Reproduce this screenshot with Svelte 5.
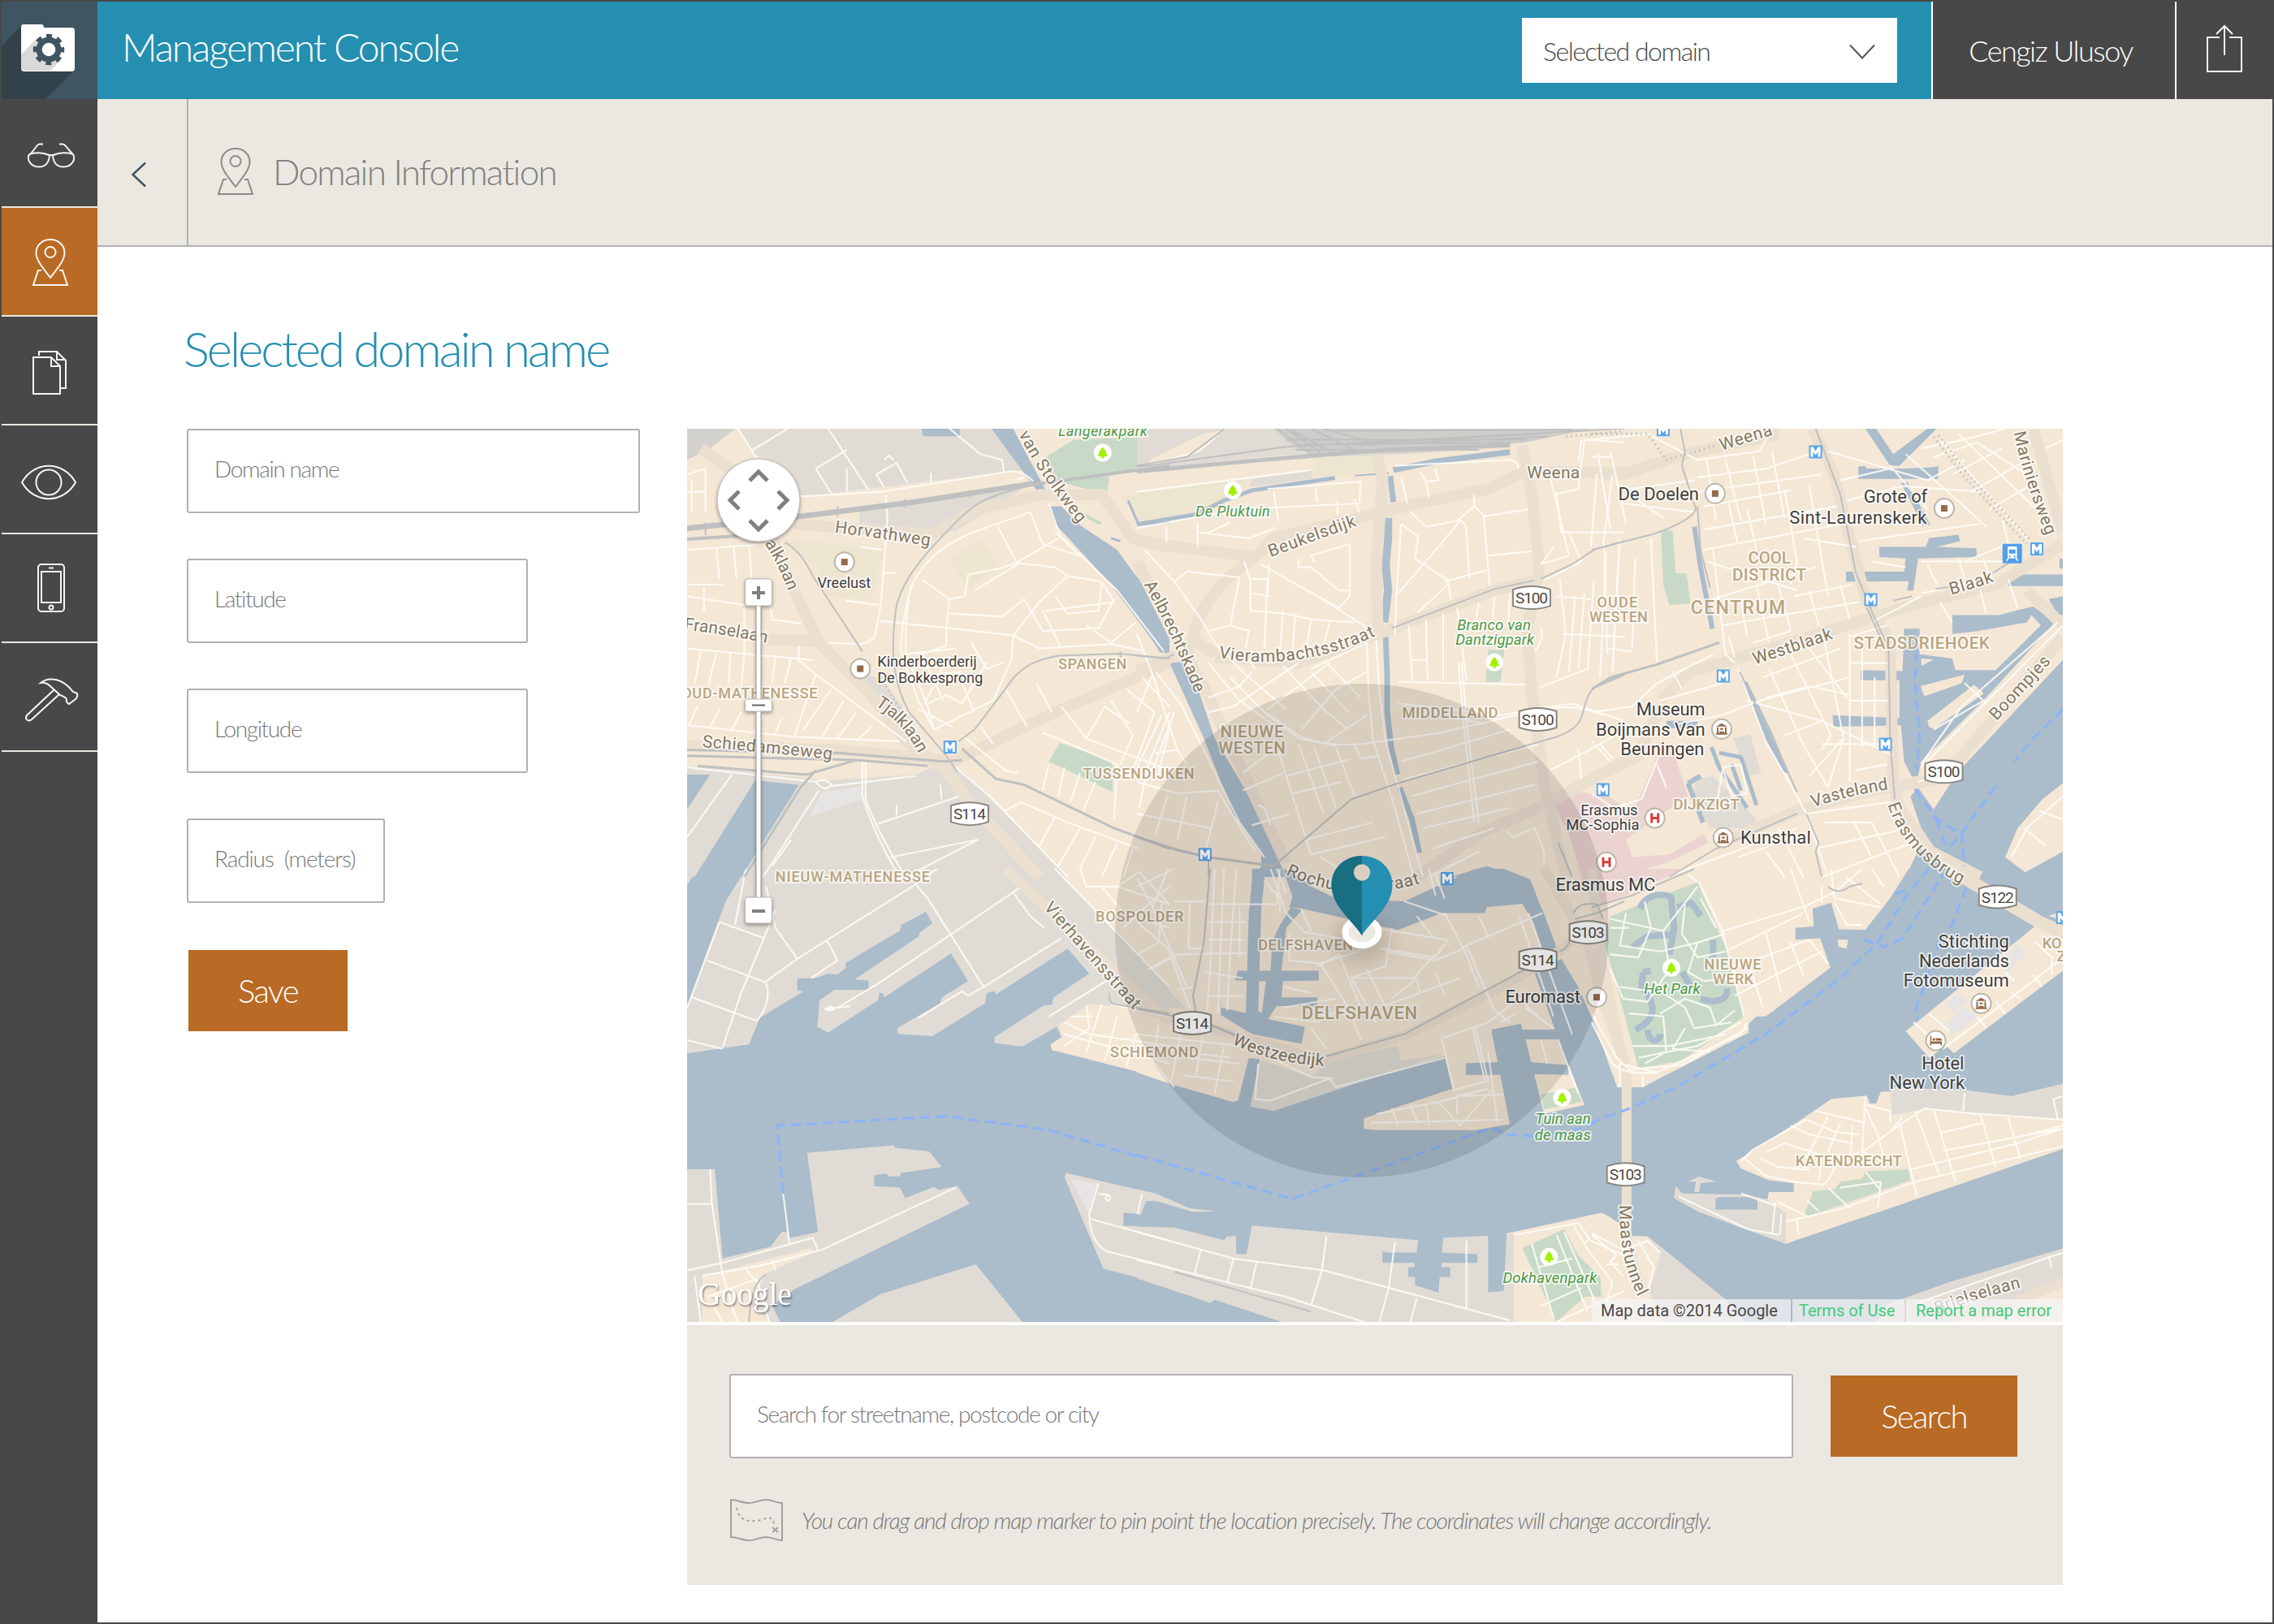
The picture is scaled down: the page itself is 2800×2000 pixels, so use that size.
<script>
  // Each map tile is drawn in its own local units and placed on the map canvas.
  const SX = 0.38265;
  const tiles = {
    A: { x: 840, y: 520, sy: 0.35714 },
    B: { x: 1400, y: 520, sy: 0.35714 },
    C: { x: 1960, y: 520, sy: 0.35714 },
    D: { x: 840, y: 1070, sy: 0.36352 },
    E: { x: 1400, y: 1070, sy: 0.36352 },
    F: { x: 1960, y: 1070, sy: 0.36352 }
  };
  const px = (t, x) => tiles[t].x + x * SX;
  const py = (t, y) => tiles[t].y + y * tiles[t].sy;
  const tf = (t) => `translate(${tiles[t].x} ${tiles[t].y}) scale(${SX} ${tiles[t].sy})`;

  const areas = [
    // south-west harbours
    ['D', 'water', 'M0,0H1568V1568H0Z'],
    ['D', 'ind', 'M205,0L1568,0L1568,715L1400,670L1190,615L1185,595L1220,570L1205,535L1095,602L1005,590L1005,570L1160,465L1190,460L1195,435L1310,355L1240,270L1010,425L1005,415L980,420L975,455L805,567L695,560L692,540L830,455L835,435L920,380L865,287L650,435L645,420L635,420L630,445L470,555L435,535L442,445L490,410L600,410V378L555,375L760,230L765,215L805,185L785,145L705,190L700,210L525,320L527,335L500,358L470,355L430,370L370,372V412L390,415L250,505L215,595L16,625V470L80,280L140,110Z'],
    ['D', 'ind', 'M0,0L50,0L0,80Z'],
    ['D', 'land', 'M1200,0L1568,400V0Z M1310,458L1568,480V715L1190,612L1185,595L1225,568L1210,530Z'],
    ['D', 'ind', 'M402,962L680,937L685,945L795,957L835,1010L705,1030L700,1042L665,1042L655,1032L618,1038V1075L700,1080L718,1115L810,1078L825,1088L885,1075L925,1135L360,1425L290,1480L330,1568L0,1568V1018H105L130,1320L285,1280L320,1230H340L345,1250L437,1230Z'],
    ['D', 'land', 'M65,1380L415,1285L420,1300L270,1370L220,1480L330,1568L65,1568Z'],
    ['D', 'ind', 'M430,1568L640,1440L945,1340L1120,1568Z'],
    ['D', 'ind', 'M1235,1030L1500,1095L1568,1130L1520,1130L1495,1120L1480,1170L1420,1165V1210L1568,1212V1412L1355,1355L1230,1045Z'],
    ['D', 'pale', 'M1250,1050L1340,1065L1310,1170Z'],
    // south-east
    ['F', 'water', 'M0,0H1568V1568H0Z'],
    ['F', 'land', 'M0,0L1020,0L960,100L880,207L820,205L795,205L770,115L710,135L715,195L655,200V240L735,235L768,335L560,500L530,500L505,525V555L200,720L165,740L80,740L0,500Z M790,240L825,240L820,270L795,265Z'],
    ['F', 'pink', 'M0,0H300L45,120L0,130Z'],
    ['F', 'green', 'M340,45L60,160L45,260L150,675L290,650L490,500L440,290Z'],
    ['F', 'land', 'M1010,550L1425,195L1516,225V345L1165,625L1140,600L1085,640Z M1470,160L1568,120V190Z M1370,0H1420L1400,12Z'],
    ['F', 'pale', 'M1140,460L1175,420L1210,450L1170,488Z M1130,530L1200,470L1240,500L1160,565Z M1310,330L1370,255L1395,290L1340,350Z'],
    ['F', 'land', 'M465,990L680,845L770,780L885,768L895,795L915,795L930,755L1205,750L1350,770L1568,715V930L625,1270L480,1215L340,1160L265,1115L270,1075L290,1100L500,1105L565,1120L570,1095L650,1095V1065L570,1055L480,1015Z'],
    ['F', 'ind', 'M960,740L1205,750L1350,770L1380,765L1568,715V850L1500,850L1240,830L1080,812L965,835Z'],
    ['F', 'ind', 'M270,1075L290,1100L500,1105L565,1120L580,1135L625,1165V1270L480,1215L340,1160L265,1115Z M310,1060L345,1042L400,1060L350,1065L345,1095H330L335,1060Z'],
    ['F', 'water', 'M398,1118l10,-6h120l5,6V1155H398Z'],
    ['F', 'green', 'M880,1025L1018,1018L1025,1055L800,1140L680,1182L712,1092L780,1085L800,1060L870,1050Z'],
    ['F', 'ind', 'M0,1165L50,1170L80,1200L95,1240L180,1245L430,1458L520,1568H0Z M950,1475L1150,1400L1568,1270V1568H900Z'],
    ['F', 'land', 'M0,1165L50,1170L80,1200L95,1245L180,1248L222,1300L185,1430L240,1568H0Z M1080,1568L1568,1390V1568Z'],
    // centre south
    ['E', 'water', 'M0,690L110,730L310,790L325,785L360,640L395,645L365,805L440,820L700,725L990,635L1015,745L730,845V880L770,885H1090L1200,865L1140,545L1235,525L1240,545L1345,545L1280,355L1365,305L1420,400L1470,520L1545,740L1568,740V1210L1540,1190L1495,1165L1190,1235L1180,1568H0V1125L30,1120L0,1085Z'],
    ['E', 'land', 'M1250,578L1355,578L1440,800L1310,830Z M0,610L200,640L320,785L110,730L0,690Z'],
    ['E', 'ind', 'M0,1212L120,1215L280,1258L290,1245H318L320,1305H352L370,1208L905,1258L895,1410L970,1435L985,1250L1130,1243V1435L1180,1430L1190,1235L1215,1238V1568H560L250,1460L235,1472L195,1455L0,1388Z M0,1085L60,1100L170,1150L255,1160L180,1162L60,1125L30,1125L10,1175L0,1165Z'],
    ['E', 'land', 'M1213,1235L1495,1165L1568,1210V1568H1213Z'],
    ['E', 'water', 'M790,1295L805,1300H900L905,1258L985,1250L980,1300L1095,1305V1335H980V1350H1008V1382H970V1435L895,1410V1382H873V1350H893V1335H790Z M1058,658L1165,655L1170,698H1058Z M1265,655L1390,665L1388,698L1270,695Z M1240,545H1350V578H1240Z'],
    ['E', 'water', 'M370,0L410,0V40L400,130L390,480L425,510L540,535L530,593L370,560L270,495V470L350,488L360,150L370,40Z M495,130L530,140L480,200L465,345L585,345V378L470,380L465,435L580,435V465L450,465L420,510L400,500L415,380L315,378L325,345L430,345L435,250L455,200Z'],
    ['E', 'water', 'M470,0L500,95L490,130L530,135L840,207L980,150L1120,150L1125,130L1240,118L1275,180L1310,290L1350,270L1300,130L1265,35L1180,0H1090L860,110L640,100L560,60L500,10Z'],
    ['E', 'ind', 'M0,300L160,475L0,455Z M400,650L560,705L620,650L840,600L850,650L990,628L440,820L365,805Z'],
    ['E', 'pink', 'M1425,0H1568V90L1440,80Z'],
    ['E', 'green', 'M1568,150L1500,240L1568,480Z M1300,765L1415,740L1430,790L1310,815Z M1240,1285L1375,1220L1420,1310L1490,1380L1495,1450L1440,1450L1350,1535Z'],
    // north-west
    ['A', 'ind', 'M180,22L1000,22L1110,165L1050,170L390,258L360,200L300,135L230,110Z M570,290L1120,215L880,375L570,350Z M1500,22H1568V100L1480,125Z'],
    ['A', 'rails', 'M16,22H170L90,90L16,130Z'],
    ['A', 'olive', 'M320,400L650,440L610,615L470,600L430,500Z M860,470L960,405L1020,500L920,575Z M1420,260L1568,225V350L1470,350Z'],
    ['A', 'ind', 'M16,1185L460,1235L750,1215L850,1170L910,1210L1240,1568H16Z M560,870L640,880L740,1030L650,990Z'],
    ['A', 'pale', 'M450,1275L585,1255L580,1300L410,1360Z'],
    ['A', 'water', 'M995,22H1065L1170,235L1145,240Z M1180,290L1220,290L1280,355L1400,440L1480,560L1568,690V800L1540,790L1380,560L1200,350Z M770,22H893V48H775Z M0,1215L90,1215L0,1360Z M235,1235L375,1250L190,1568L40,1568Z'],
    ['A', 'green', 'M1170,120L1260,60L1500,50L1470,100L1500,150L1375,180L1365,260L1300,230L1200,200Z M1215,1105L1385,1170V1275L1180,1170Z M1270,300L1350,345L1345,355L1300,330Z'],
    // north-centre
    ['B', 'ind', 'M0,22H1480L1100,95L720,118L480,112L0,165Z'],
    ['B', 'yard', 'M440,22H1460L1250,70L900,105L560,112L500,80Z'],
    ['B', 'land', 'M210,40L270,30L200,100L40,150L40,130Z'],
    ['B', 'olive', 'M0,240L370,190L340,240L180,320L0,350Z M570,120L770,115V170L570,190Z'],
    ['B', 'ind', 'M370,195L565,165V195L360,225Z'],
    ['B', 'water', 'M0,530L60,640L105,790L75,795L0,670Z M105,830L150,825L200,930L250,1090L350,1270L460,1510L475,1568H375L400,1530V1490L310,1350L215,1090Z M1010,1568L1125,1530L1230,1568Z'],
    ['B', 'green', 'M1130,785H1182L1170,895H1122Z'],
    ['B', 'pink', 'M1340,1320L1420,1275L1520,1290L1568,1350V1568H1430L1390,1420Z'],
    // north-east
    ['C', 'pink', 'M220,1100L260,1130L310,1290L240,1340L110,1440L130,1500L250,1490L360,1420L375,1450L240,1520L100,1560L0,1568V1290L50,1285L130,1350L200,1180Z'],
    ['C', 'ind', 'M455,1090L510,1075L545,1210L500,1220Z M330,1230L390,1220L530,1370L525,1400H380L330,1300Z'],
    ['C', 'green', 'M222,372H260L270,520L305,522L318,625L250,630L230,560Z'],
    ['C', 'water', 'M1568,760L1210,1170L1170,1220L1100,1335L1050,1260L1025,1290L1060,1400L1075,1420L1010,1568H1568Z'],
    ['C', 'land', 'M1568,1200L1450,1300L1370,1400L1330,1500L1395,1552L1568,1450Z'],
    ['C', 'water', 'M1005,712H1055V800L1160,815L1170,855H1300L1445,700L1415,665L1400,690L1240,720L1160,730V665L1310,665L1420,635L1490,690L1260,960L1060,1170L1050,1220L1030,1222L1005,1170L995,1045L778,1050L775,1010L990,1020V890L865,890V855L1000,858Z M1470,610L1516,600V665H1500Z'],
    ['C', 'land', 'M1058,910L1200,870L1190,900L1070,945Z M1080,1030L1230,905L1262,935L1100,1058L1085,1050Z M1060,815L1100,818L1060,840Z'],
    ['C', 'water', 'M858,152H880L885,160H1000L1100,155L1115,152V195H858Z M880,22H915L970,110L1080,22H1110L990,150H960Z M995,210L1015,205L1090,355H1065Z M925,430H1075L1085,400L1180,388L1185,410L1110,430L1238,435V465L1050,470L1035,580H1015L1020,548L818,550V515L1005,515L1010,470L925,465Z M1340,525H1516V565H1340Z M1505,470H1516V505H1505Z M240,1030H340V1055H240Z'],
    ['C', 'water', 'M480,890L500,895L580,1070L635,1212L615,1205L550,1080L520,980Z']
  ];

  const waterLines = [
    ['A', 3, 'M1435,270L1468,352L1568,345 M1290,240L1325,245 M1380,400L1410,410'],
    ['B', 5, 'M0,352L190,318L280,270L370,235L637,192'],
    ['B', 2, 'M702,184L810,176'],
    ['B', 7, 'M825,165L960,135L1200,103'],
    ['B', 7, 'M815,185L825,275 M845,1260L885,1370L908,1485'],
    ['B', 10, 'M808,330V400L800,490L808,580L795,690'],
    ['B', 7, 'M800,738L805,870L805,1000L818,1120L838,1215'],
    ['C', 6, 'M330,360L350,500L388,712 M310,1245L358,1380 M310,1245L350,1220'],
    ['C', 5, 'M385,1120L410,1190L500,1330 M410,1140L480,1155L530,1320 M450,1180L480,1270'],
    ['E', 4, 'M1300,140L1345,268'],
    ['F', 8, 'M155,135C170,90 220,80 255,95L265,200L250,290 M130,265L180,228L270,222 M275,130L320,115L350,160 M390,240V300 M290,350L320,400 M350,440C410,460 440,440 435,405 M165,350L190,345M165,350L160,400C210,460 210,510 140,545 M180,545C180,590 220,590 220,560']
  ];

  const arterials = [
    ['A', 14, 'M60,90L180,180 M290,400L360,580L440,760L600,930L720,1100L850,1200L930,1320L1150,1568 M870,1170L1200,1000L1568,830 M800,390L950,300L1150,250L1350,250L1450,400L1568,430 M260,750L440,755 M16,1115L500,1130L850,1165 M360,350L800,390'],
    ['B', 14, 'M775,115L790,200L770,500L775,720 M1240,80L1270,250L1295,500L1255,720L1270,930L1310,1250L1380,1568 M0,410L200,440L380,465L440,400L710,330L900,280L1130,230L1250,170L1568,175 M380,465C280,540 200,620 180,750L250,800 M180,780L0,860 M250,810L520,830L765,735L1000,640L1150,580L1290,545 M0,480L130,760L210,900L330,1180L480,1520 M900,1568L1100,1420L1310,1320L1568,1170'],
    ['C', 14, 'M0,175L100,180L300,110L600,40 M710,22L780,180L830,400L880,600L960,760L970,1250L990,1330L1090,1480L1250,1568 M220,960L320,860L450,820L700,740L1000,640L1300,560L1516,420 M0,1230L150,1150L220,980 M1420,22L1516,380 M400,1460L660,1340L900,1270L1120,1230 M1120,1230L1200,1140L1516,740 M1400,580L1516,700'],
    ['D', 12, 'M1040,0L1568,520'],
    ['E', 12, 'M0,470L300,560L600,650L870,560L1100,440L1290,330L1420,230 M1310,0L1450,250L1490,420L1568,650'],
    ['F', 16, 'M1150,0L1440,180L1568,240'],
    ['F', 12, 'M0,0L30,300L112,700V1260L160,1440 M1130,1568L1516,1400']
  ];

  const streets = [
    ['A', 'M220,100L340,22 M180,22L240,125 M470,22L600,235 M860,22L960,110L1030,130L1035,170 M380,256L640,240L1050,170Q1100,165 1130,205 M430,160L530,95 M430,160L480,245 M530,160V240 M625,180L690,140L725,210 M625,180L650,225 M650,130L665,115L680,130 M800,205V175 M655,250L660,330L650,480L640,620L620,740Q590,770 560,765L470,760 M650,520H685 M525,615L630,630 M570,430L645,440'],
    ['A', 'M16,440L270,420 M110,430L120,540 M165,425L175,540 M215,425L225,560 M16,560H130 M16,600L200,630 M16,180L75,160V310 M30,200V310 M16,240H75 M270,540L290,680L385,695 M70,570V650 M200,640V800 M16,780L420,820 M60,790L40,900 M110,795L85,905 M155,795L150,900 M200,800L190,910 M250,805L235,905 M300,810L290,900 M350,815L330,900 M375,770V820L430,870L720,1100 M16,1045L360,1085L700,1100 M50,980L20,1045 M120,990L90,1050 M190,1000L160,1060 M260,1010L230,1070 M320,1020L300,1075 M430,870L360,1085 M480,920L390,1060 M520,960L450,1085 M560,1000L500,1090 M610,1050L560,1100'],
    ['A', 'M1120,310L960,370Q800,430 740,560Q700,700 705,800L760,960L810,1060 M735,560Q715,700 720,800L790,980L810,1060 M775,545L860,610L850,710L850,770L770,800 M860,610L910,600L920,525L1020,505L1075,485L1210,400 M1015,360L1080,490L940,580 M1075,485L1200,500L1240,530 M1120,310L1160,420L1290,465 M1200,380L1280,460 M1240,530L1150,620L1065,735L860,710L635,685 M1240,530L1350,550L1390,620L1170,650 M860,660L1030,670L1100,610 M1100,610L1160,720L1340,710L1390,610 M1065,735L1150,780L1380,765L1490,790 M1065,735L1060,820L1000,960L810,1060 M1200,600L1240,660L1340,650L1350,555 M1300,700L1380,760L1460,690 M1160,650L1220,780 M930,760L980,850L1030,830 M720,800L880,780 M770,800L840,960 M850,820L780,970 M900,900L940,1000 M790,970L850,940L900,970L980,830 M730,880L900,860 M760,990L870,1050 M1180,280L1215,390L1400,580L1550,790 M1070,200L1100,190'],
    ['A', 'M1220,980L1300,1090L1568,1200 M1300,1090L1360,980L1440,1040 M1380,960L1450,1080L1410,1180 M1430,920L1520,1000L1450,1200 M1480,880L1568,980 M1160,1070L1250,1110L1400,1180L1390,1370 M1568,1000L1500,1180L1470,1330 M1568,1060L1530,1220 M1180,1180L1160,1270 M1230,1190L1210,1290 M1280,1210L1250,1310 M1330,1240L1290,1340 M880,1190L1000,1300L1240,1568 M1040,1340L1090,1310L1240,1380L1470,1470 M1200,1360L1150,1460 M1280,1400L1210,1530 M1330,1430L1280,1540 M1400,1450L1350,1568 M1450,1470L1420,1568 M900,1080L1040,1200L1080,1210 M960,1050L1000,1110 M1040,920L1110,1050 M1140,900L1190,1000'],
    ['A', 'M16,1190L430,1240Q460,1225 480,1250Q460,1280 430,1240 M480,1255L750,1220 M590,1170V1300Q640,1440 720,1568 M580,1170V1290Q620,1430 700,1568 M630,1385L890,1290 M690,1320V1355 M830,1250L835,1300 M670,1500L950,1440L720,1568 M160,1215L16,1430 M440,1270L260,1568 M350,1440L290,1530'],
    ['B', 'M0,240L560,165 M0,160L200,100L280,25 M0,365L330,300L715,280L720,205L420,230 M95,360V415 M195,345V430 M195,380L360,400L445,365 M230,380L300,345 M440,240L455,340 M575,225L580,275 M645,270V320 M700,265L715,310 M570,480L560,460L685,420V600L650,640L480,540L400,490 M520,470V500H560L650,580H685 M25,440L120,550L200,670L250,760L340,860L480,990 M160,515L330,535L300,700 M120,550L160,515 M230,720L300,700L360,720L350,780 M360,540L420,540L410,780 M345,480L365,550V650L480,660L560,680L700,690 M550,580L640,640L750,715 M470,650L460,790 M510,660L500,790 M560,680L545,780 M620,690L600,770 M425,490L420,600 M360,820L380,850 M370,590L430,600'],
    ['B', 'M830,150L1200,130Q1230,135 1225,160 M850,190L870,280 M910,170L930,205L970,200L960,160 M930,205L940,260 M850,350L905,395L895,470L1000,545L1010,610 M880,310L930,360L1030,340L1085,290V250 M840,590L930,480L1040,340Q1060,345 1060,380L1070,540 M1085,290L1115,320L1135,560 M1115,325L1260,300 M1130,460L1270,445 M990,550L1125,510 M905,655L1000,560 M850,350L835,600L830,730 M1300,490L1390,460L1370,370L1330,190 M1340,250L1420,230L1440,60L1568,70 M1350,240L1365,380L1568,380 M1430,60L1420,140 M1480,180L1460,430 M1530,180L1500,420 M1390,380L1430,480L1310,545 M1300,490L1340,430'],
    ['B', 'M875,700L885,890 M930,680L935,890 M985,660V890 M1030,640L1060,890 M840,895L1250,905 M1100,620L1090,690H1120 M1150,600L1145,680 M1200,590L1195,690 M885,820H930 M1295,915L1450,850L1470,550 M1360,540L1380,730L1350,880 M1410,600L1390,860 M1440,590L1420,850 M1350,600L1460,610 M1370,730L1568,740 M1510,450L1490,880 M1550,470L1530,860 M1300,710Q1310,750 1280,790 M740,760L745,930L760,1100L830,1330L890,1568 M770,750L780,930L800,1100L920,1568 M560,850L740,760 M470,840L600,990L680,1060 M560,860L680,1000 M610,830L720,950 M420,990L620,830 M530,1060L640,920L740,860 M840,970L1170,1010L1400,970L1568,1030 M850,985L1120,1040 M600,1110L740,1010 M400,990L520,1080Q600,1120 720,1110L980,1070L1300,990Q1420,970 1500,1010'],
    ['B', 'M230,830L330,960L460,1060 M230,950L330,910L370,860 M300,880L420,1010L520,1090L640,1115 M230,1000L310,980L520,830 M60,860L140,970L210,1120L330,1380L410,1500 M0,730L50,870L0,1000 M50,870L130,1130 M80,1010L0,1190 M120,1000L50,1200 M60,1140L130,1130L160,1180 M0,1240L130,1280L260,1270L380,1480 M260,1310L220,1480 M100,1280L60,1420 M160,1290L130,1440 M0,1350L240,1400 M340,1210L450,1120L480,1220L560,1490 M450,1120L540,1420 M520,1110L600,1350 M570,1120L640,1330 M340,1270L470,1210 M390,1320L410,1330L430,1390 M370,1390L490,1350 M480,1220L690,1160 M500,1280L660,1240 M540,1440L760,1380 M590,1500L700,1568 M560,1490L800,1430 M640,1120L700,1290 M700,1110L720,1160L780,1150'],
    ['B', 'M850,1170L1200,1060 M860,1230L1290,1110 M880,1290L1290,1170 M900,1350L1280,1250 M920,1400L1200,1330 M950,1470L1150,1400 M1045,830L1060,1030L1100,1380 M1035,830L1050,1030L1085,1380 M940,1568L1100,1480 M1190,1410L1210,1430L1280,1400L1310,1480V1520 M1330,1200L1490,1110L1568,1060 M1420,1130L1430,1230 M1490,1110L1530,1160'],
    ['C', 'M0,60L180,40L340,130L540,100L580,22 M20,110L60,370 M60,100L110,350 M100,280L330,310 M120,230L330,200 M150,270L230,330 M340,190L560,160L700,110 M430,130L480,340 M370,130L400,340 M520,120L560,350 M580,100L620,330 M340,240L740,180 M360,290L640,235 M360,370L790,290 M360,440L810,350 M440,280L470,420 M500,300L530,440 M620,230L660,480L640,560 M700,220L760,600 M680,400L850,430 M370,480L660,580 M650,600L840,560 M390,610L720,500 M420,700L860,620 M530,560L570,760 M600,560L640,720 M700,580L730,700 M800,560L830,680 M480,620L500,740 M0,120H60'],
    ['C', 'M760,100L1080,200L1200,130 M800,200L960,160 M820,270L1000,220L1250,240 M960,150L1080,300 M1010,110L1270,360 M1120,60L1400,400 M1180,40L1460,330 M1060,90L1200,60L1330,22 M1100,120L1240,70L1400,180 M1160,180L1320,90 M1220,240L1400,130 M1280,300L1440,200 M860,410L1250,350 M840,340L1050,350 M1200,480L1340,420L1320,330 M1060,480L1350,480 M1080,490L1110,560 M1180,470L1200,540 M1260,470L1290,560 M1060,590L1230,550 M900,480L1010,500 M900,690L1060,600 M1120,620L1160,690 M1250,580L1270,660 M1340,540L1370,640 M1516,60L1460,90'],
    ['C', 'M390,440L430,800L460,830 M440,740L460,810 M0,690H180 M140,470L130,780 M190,400L210,830 M90,400L70,780 M40,420L50,800 M50,780L130,790 M0,1000L130,980L210,900L390,800 M220,960L420,900 M260,860L290,920 M280,1040L420,1010L540,960L830,880 M470,850L560,1100L660,1290 M500,960L740,1030L970,1150 M570,850L680,1110L760,1260 M640,800L770,1080L740,1130 M700,780L820,950 M750,760L810,1090L760,1260 M830,730V1240 M870,780V1120 M910,880V1110 M550,880L800,780 M520,760L640,720 M560,950L700,910L830,940 M620,1080L740,1030 M740,1110H960 M700,1220L810,1090 M830,830H950 M830,960H960 M850,1200L950,1180 M830,740L950,700'],
    ['C', 'M660,1290L690,1350L760,1568 M690,1350L960,1310 M750,1380H900 M720,1470L1020,1400 M740,1568L1030,1450 M840,1370L900,1500 M900,1380L990,1568 M560,1480L620,1568 M470,1500L680,1420 M600,1400L680,1568 M220,1140L160,1300L70,1330L0,1280 M0,1100L60,1170 M210,1180L240,1260 M260,1560L660,1400 M420,1200L400,1330 M420,1190L480,1180L500,1280L450,1290Z M1516,700L1060,1190 M1500,690L1190,980L1060,1180 M1100,1060L1260,960 M1200,900L1270,970 M1516,1290L1400,1400L1350,1500 M1390,1400L1460,1460 M1440,1340L1516,1370 M1050,1240L1180,1200'],
    ['D', 'M205,1L170,190 M120,180L265,235 M80,310L270,385 M30,435L240,515 M16,580L130,610 M120,180L16,470 M300,140L190,420L130,605 M270,60L300,200L370,305 M265,385L370,305L740,60L820,0 M750,50L790,100L970,400 M270,385Q290,450 240,515 M465,240L500,310L415,370 M615,400L1085,65 M1065,80L1120,160L1165,200 M970,400L1220,235 M760,505L900,415L920,430L970,400 M500,470L620,395 M460,475Q480,460 490,475Q480,485 460,475L540,465 M1180,500L1380,370 M1200,0L1568,400 M1380,460L1568,500'],
    ['D', 'M1300,460L1310,540L1230,600 M1350,460L1300,620 M1230,520L1310,560L1568,600 M1400,500L1360,650 M1250,500L1320,500 M1230,560L1568,660 M1460,560L1430,670 M1280,0L1300,60H1400L1568,120 M1350,60L1420,150L1568,200 M1400,60L1470,10L1568,120 M1420,200L1500,120L1568,60 M1500,340L1568,300'],
    ['D', 'M90,1018L95,1130L130,1380 M16,1135H95 M16,1360L130,1335L420,1250L437,1290 M40,1380L60,1535 M325,1100L345,1270 M65,1378L250,1345L450,1290L880,1080 M130,1370L165,1500L180,1535 M200,1350L240,1400 M290,1325L300,1360 M80,1450L240,1390L280,1535 M100,1480L130,1535 M1310,1170Q1310,1260 1365,1295L1568,1350 M1310,1185L1568,1260 M1340,1100L1370,1105Q1385,1110 1370,1125Q1355,1120 1370,1105 M1340,1065L1310,1170 M1480,1100L1465,1170'],
    ['E', 'M0,1230L310,1320L600,1360L1200,1530 M0,1325L480,1450L730,1535 M205,1290L185,1375 M310,1320L290,1405 M385,1330L365,1425 M610,1245L595,1360L560,1480 M830,1265L810,1420L780,1535 M900,1455L880,1535 M1060,1260V1490 M1215,1240L1420,1200L1460,1260L1568,1310 M1455,1250L1440,1270 M1270,1270L1340,1520 M1350,1240L1450,1500 M1375,1230L1480,1480 M1400,1200L1450,1290L1530,1400L1510,1470 M1290,1350L1400,1320 M1300,1480L1430,1420 M1350,1535L1568,1430 M1510,1340H1550'],
    ['E', 'M0,30L50,130L160,400 M0,60L120,0 M100,0L50,130 M80,110L70,250L0,290 M120,110H220 M170,110L165,270H215 M45,340L130,290L350,285 M0,180L100,270L170,470 M130,410L180,400 M250,0L235,350L225,480 M280,0L260,490 M320,0L300,280L290,480 M230,120H450L460,0 M230,180H350 M230,240H350 M220,350L340,370 M230,430H340 M330,130L330,300 M430,0L480,150L540,215L740,250 M410,40L460,100V150 M490,220V310L590,320L740,270 M530,140L560,210'],
    ['E', 'M700,190L1000,240L960,300L780,270 M820,200L800,330L690,370L770,520 M590,320L680,470L720,580 M650,290L720,470 M580,330L650,290 M700,370L890,370L960,290 M990,150L1050,270L960,310L800,280 M1050,265L1305,150 M1050,265L1100,400 M1100,160L1130,230 M860,110L1000,160 M900,160L960,240 M740,340L800,470 M820,440L900,370L910,420L960,400 M780,470L1040,370 M960,350L990,430 M590,500L700,470 M1060,260L1150,480L1200,520 M470,400L560,420 M470,470L640,440 M440,500L590,520 M980,575L1130,520L1230,440L1290,500 M980,575L1020,750L1120,720L1080,540 M1090,540L1130,720 M1030,830L1030,770L1110,750 M770,830L970,790L1130,745 M820,810L840,870 M880,800L905,865 M930,795L940,870 M970,790L1040,870L1140,750 M1130,620L1160,860 M750,860L1180,850 M1040,770L1180,765 M1250,470L1340,540 M1300,580L1320,660 M1355,578L1420,760 M1230,160L1340,500 M1260,150L1400,560 M1170,520L1220,490'],
    ['E', 'M0,600L300,640 M0,560L330,600 M70,530L50,650L120,740 M140,560L110,720 M210,570L190,700 M280,600L250,760 M160,640L330,660 M150,700L310,720 M390,660L380,780L430,785L620,710L640,740L990,640 M430,640L560,705L630,710 M560,540L610,610 M450,0L480,80 M940,0L960,90 M960,20L990,100'],
    ['F', 'M0,520L60,650Q90,700 210,690L480,560L500,520 M0,490L80,640L120,680L290,665L500,540 M345,45L420,210L490,500 M410,215L690,125L780,80L870,0 M640,0L700,180 M440,275L680,150 M470,330L700,240 M560,215L610,420 M460,430L740,280 M700,240L760,320 M500,300L550,470 M640,250L680,360 M770,0L780,100L930,130 M780,110L820,190H870 M820,30L930,120 M900,0L940,60 M760,60Q790,90 830,60 M740,115V60 M310,20L340,45 M210,690L90,660V740 M165,740V700'],
    ['F', 'M60,170L230,210L340,60 M110,150L90,260L220,280L340,250L430,220 M170,110L190,200L150,300L60,290 M60,200H120 M230,210L250,340L180,450L100,440 M300,120L290,220L340,300L430,280 M340,250L310,350L360,380L460,370 M90,400L230,420L300,470L330,540L450,520 M220,490L300,440L380,470L400,530L460,480 M120,490L230,500L240,620L170,660 M300,540L260,610L380,620 M130,600L250,600L430,560 M350,100L400,200 M150,640L340,600L480,520 M200,380L230,420 M60,340L100,440'],
    ['F', 'M480,990L520,950L690,850 M490,980L560,1040L650,1060L740,1070Q770,1060 790,980L860,960 M560,960L620,930L740,970L730,1060 M540,980L600,1010L700,1020 M640,870L700,900L840,930 M690,850L780,890L860,900 M720,820L880,860 M760,840L690,980 M800,860L760,960 M840,870L830,980 M880,770L870,960L870,1000 M880,810L920,900L940,980L870,960 M885,800L960,820V860 M870,960L960,890L1070,812L1240,830L1516,850 M960,890L1000,840 M990,860L1045,1105 M1040,820L1120,1040 M1100,815L1170,1060 M1250,830L1300,1010 M1340,845L1380,985 M1120,895L1260,860 M1130,955L1516,880 M1020,1020L1370,930L1516,880 M1040,1060L1516,940 M1370,910L1516,870 M625,1195L810,1150L1040,1060 M660,1190L665,1240 M800,1080L930,1060L920,1150 M760,1080L830,1150 M690,1120L730,1160 M700,1180L600,1130 M590,1130L580,1240 M610,1170L605,1240 M280,1110L500,1220L600,1240 M480,1100L590,1140 M880,1025L930,1090 M1200,760L1195,820 M1516,770L1485,780L1500,850'],
    ['F', 'M1035,520L1120,600 M1085,490L1150,550 M1130,610L1420,380L1516,300 M1240,500L1270,540 M1300,450L1330,490 M1350,420L1380,440 M1420,360L1450,400 M1430,250L1480,300V360 M1330,350L1360,380 M0,1235L100,1290L180,1260L220,1300 M150,1260L200,1350L180,1430 M0,1240L80,1310L60,1330L100,1380 M1050,1470L1516,1300 M1470,1310L1480,1350']
  ];

  const rails = [
    ['A', 4, 'M16,370L370,330L740,280L1130,215L1568,150 M16,362L370,322L740,272L1130,208 M16,403L280,385'],
    ['A', 2, 'M330,415Q380,440 420,530L580,790 M1130,215C1000,250 950,270 900,325C800,430 690,550 685,670C670,800 680,900 730,1000L850,1150L885,1205 M1568,815L1410,798L1210,805C1130,820 1080,850 1040,920L940,1060L890,1100 M75,345V390 M500,290V325 M715,265V295 M925,235V262 M1410,790V812'],
    ['A', 3, 'M16,1130L500,1140L840,1170L900,1165 M16,1150L560,1165L790,1185 M50,1185L400,1215L560,1165 M900,1125L1010,1230L1100,1250L1390,1400L1568,1470 M200,1568L380,1260L430,1200'],
    ['B', 5, 'M0,170L400,130L800,95L1200,80'],
    ['B', 2, 'M0,155L480,85L900,60L1568,22 M450,22L560,110 M480,22L590,104 M500,30L620,100 M560,22L700,95 M280,25L160,120L0,150 M480,60L1250,60 M510,95H1100 M600,22L760,70L1300,40 M640,30L1400,26 M700,80L1320,50 M520,78L1200,70'],
    ['B', 2, 'M820,710L1040,620L1150,575L1280,545 M0,805L90,815L120,800 M440,1530L690,1300L840,1245L1140,1150L1350,1085C1440,1050 1430,1010 1440,980C1460,900 1480,910 1568,870 M1300,540L1400,490L1470,440L1568,410 M230,1500V1568 M1355,1450L1400,1568'],
    ['B', 3, 'M0,1430L130,1475L230,1500L440,1530 M1480,910L1568,870'],
    ['C', 2, 'M285,22L300,100L290,150L335,300Q320,340 200,385L0,440 M340,290L350,440L380,570 M720,22L800,250L850,520L900,650L955,780L960,1100L975,1300 M885,640L945,780 M475,860L600,1130L660,1275 M660,1350L400,1470L250,1568 M690,1350L730,1450L720,1480L740,1568 M970,615L1030,600 M1105,575L1180,565 M1290,520L1350,480'],
    ['C', 3, 'M0,920L60,880L210,835L410,760'],
    ['D', 2, 'M1568,490L1400,460Q1370,460 1375,420 M215,1535Q220,1400 270,1375'],
    ['E', 2, 'M235,0L215,250L180,430L190,490 M0,475L120,500 M610,635L860,560L1250,340 M1360,280Q1390,270 1395,230 M1405,150Q1420,110 1480,120L1500,170 M1410,170L1480,150L1568,110 M120,1365L560,1500'],
    ['E', 3, 'M240,530L320,565'],
    ['F', 2, 'M0,130L130,90L330,0 M760,60Q790,90 830,60L870,50']
  ];

  const dotted = [
    ['C', 'M1100,50L1200,190L1400,420 M1115,45L1215,185L1415,410 M0,40L180,40L240,130L400,80'],
    ['B', 'M1380,50L1568,30'],
    ['A', 'M640,880L700,990']
  ];

  const ferries = [
    ['D', 'M325,1100L305,870L850,838L1180,885L1468,975'],
    ['E', 'M0,970L500,1118L1140,878L1190,900L1280,905L1400,890L1470,860'],
    ['F', 'M-6,862L130,808L270,740L560,560L800,370L920,250L1020,80L1085,0 M875,240L940,265L1000,235L1130,20 M1205,65L1155,200 M1120,240L1045,470L1048,510 M975,85L1020,70'],
    ['C', 'M1045,790L1040,900L1055,1080L1045,1200 M1040,1265L1110,1370L1190,1420L1200,1530 M1516,990L1430,1080L1360,1170 M1300,1255L1180,1430L1140,1480 M1110,1370L1145,1480']
  ];

  // tile, kind, size, text, x1, x2, baseline
  const labels = [
    ['A', 'park', 18, 'Langerakpark', 1210, 1497, 49],
    ['A', 'poi', 18.5, 'Vreelust', 435, 607, 571],
    ['A', 'poi', 18.5, 'Kinderboerderij', 628, 948, 842],
    ['A', 'poi', 18.5, 'De Bokkesprong', 628, 968, 898],
    ['A', 'area', 18, 'SPANGEN', 1210, 1430, 852],
    ['A', 'area', 18, 'OUD-MATHENESSE', -2, 435, 952],
    ['A', 'area', 18, 'TUSSENDIJKEN', 1290, 1648, 1228],
    ['D', 'area', 18, 'NIEUW-MATHENESSE', 300, 797, 45],
    ['B', 'park', 18, 'De Pluktuin', 188, 428, 325],
    ['B', 'street', 21, 'Weena', 1255, 1425, 192],
    ['B', 'park', 18.5, 'Branco van', 1030, 1267, 716],
    ['B', 'park', 18.5, 'Dantzigpark', 1025, 1278, 767],
    ['B', 'area', 20.5, 'NIEUWE', 268, 472, 1087],
    ['B', 'area', 20.5, 'WESTEN', 262, 478, 1142],
    ['B', 'area', 18.5, 'MIDDELLAND', 853, 1162, 1018],
    ['C', 'poi', 22, 'De Doelen', 85, 345, 268],
    ['C', 'poi', 22, 'Grote of', 875, 1080, 278],
    ['C', 'poi', 22, 'Sint-Laurenskerk', 636, 1078, 350],
    ['C', 'area', 20.5, 'COOL', 503, 640, 488],
    ['C', 'area', 20.5, 'DISTRICT', 452, 690, 545],
    ['C', 'area', 23, 'CENTRUM', 318, 622, 660],
    ['C', 'area', 18, 'OUDE', 17, 147, 638],
    ['C', 'area', 18, 'WESTEN', -8, 180, 688],
    ['C', 'area', 20.5, 'STADSDRIEHOEK', 843, 1280, 780],
    ['C', 'poi', 22, 'Museum', 143, 365, 1012],
    ['C', 'poi', 22, 'Boijmans Van', 13, 365, 1080],
    ['C', 'poi', 22, 'Beuningen', 92, 362, 1147],
    ['C', 'poi', 18.5, 'Erasmus', -36, 148, 1355],
    ['C', 'poi', 18.5, 'MC-Sophia', -83, 153, 1407],
    ['C', 'area', 19, 'DIJKZIGT', 262, 475, 1337],
    ['C', 'poi', 22, 'Kunsthal', 478, 705, 1453],
    ['E', 'area', 18, 'BOSPOLDER', -133, 150, 178],
    ['E', 'area', 18, 'SCHIEMOND', -86, 198, 638],
    ['E', 'area', 18, 'DELFSHAVEN', 390, 695, 275],
    ['E', 'area', 22, 'DELFSHAVEN', 530, 902, 510],
    ['E', 'poi', 22, 'Euromast', 1185, 1427, 455],
    ['F', 'poi', 22, 'Erasmus MC', -116, 205, 75],
    ['E', 'park', 18.5, 'Tuin aan', 1282, 1460, 863],
    ['E', 'park', 18.5, 'de maas', 1280, 1460, 918],
    ['E', 'park', 18.5, 'Dokhavenpark', 1177, 1480, 1402],
    ['F', 'area', 18, 'NIEUWE', 362, 545, 340],
    ['F', 'area', 18, 'WERK', 390, 520, 390],
    ['F', 'park', 19, 'Het Park', 168, 350, 423],
    ['F', 'poi', 22, 'Stichting', 1115, 1343, 268],
    ['F', 'poi', 22, 'Nederlands', 1053, 1343, 332],
    ['F', 'poi', 22, 'Fotomuseum', 1003, 1343, 400],
    ['F', 'poi', 22, 'Hotel', 1062, 1198, 680],
    ['F', 'poi', 22, 'New York', 958, 1200, 745],
    ['F', 'area', 18.5, 'KATENDRECHT', 655, 998, 1007],
    ['F', 'area', 18.5, 'KO', 1450, 1512, 270],
    ['F', 'area', 18.5, 'Z', 1496, 1520, 313]
  ];

  // tile, size, text, then the points of the baseline
  const curved = [
    ['A', 21, 'Horvathweg', [490, 380], [640, 400], [799, 427]],
    ['A', 21, 'van Stolkweg', [1083, 42], [1150, 185], [1278, 352]],
    ['A', 21, 'alklaan', [265, 418], [310, 490], [342, 585]],
    ['A', 21, 'Franselaan', [6, 715], [130, 730], [275, 762]],
    ['A', 21, 'Schiedamseweg', [64, 1120], [270, 1138], [484, 1163]],
    ['A', 21, 'Tjalklaan', [620, 975], [715, 1040], [762, 1145]],
    ['B', 21, 'Beukelsdijk', [430, 465], [570, 408], [710, 356]],
    ['B', 21, 'Vierambachtsstraat', [262, 812], [520, 862], [770, 735]],
    ['B', 21, 'Aelbrechtskade', [22, 560], [95, 690], [188, 938]],
    ['E', 21, 'Rochussenstraat', [478, 18], [680, 122], [914, 48]],
    ['C', 21, 'Weena', [418, 98], [500, 70], [587, 42]],
    ['C', 21, 'Mariniersweg', [1358, 36], [1390, 200], [1464, 394]],
    ['C', 21, 'Blaak', [1156, 595], [1225, 575], [1297, 548]],
    ['C', 21, 'Westblaak', [525, 836], [650, 792], [780, 745]],
    ['C', 21, 'Boompjes', [1302, 1030], [1390, 930], [1480, 824]],
    ['C', 21, 'Vasteland', [712, 1328], [830, 1285], [957, 1266]],
    ['C', 21, 'Erasmusbrug', [953, 1318], [1000, 1490], [1190, 1594]],
    ['D', 21, 'Vierhavensstraat', [1162, 132], [1310, 310], [1454, 480]],
    ['E', 21, 'Westzeedijk', [306, 592], [420, 655], [604, 668]],
    ['F', 21, 'Maastunnel', [90, 1138], [85, 1320], [150, 1452]],
    ['F', 21, 'Brielselaan', [1110, 1508], [1240, 1455], [1384, 1418]]
  ].map(([t, size, text, ...pts]) => {
    const p = pts.map(([x, y]) => [px(t, x), py(t, y)]);
    const len = Math.hypot(p[1][0] - p[0][0], p[1][1] - p[0][1]) + Math.hypot(p[2][0] - p[1][0], p[2][1] - p[1][1]);
    const chord = Math.hypot(p[2][0] - p[0][0], p[2][1] - p[0][1]);
    return { size, text, d: `M${p[0]}Q${p[1]} ${p[2]}`, len: (len + chord * 2) / 3 - 1 };
  });

  const pins = [
    ['A', 522, 482, 'dot'], ['A', 573, 850, 'dot'], ['C', 397, 246, 'dot'], ['C', 1134, 297, 'dot'], ['E', 1479, 435, 'dot'],
    ['A', 1353, 105, 'tree'], ['B', 308, 235, 'tree'], ['B', 1150, 828, 'tree'], ['F', 256, 335, 'tree'], ['E', 1368, 775, 'tree'], ['E', 1326, 1314, 'tree'],
    ['C', 418, 1058, 'museum'], ['C', 423, 1432, 'museum'], ['F', 1253, 456, 'museum'],
    ['F', 1107, 582, 'hotel'], ['C', 203, 1365, 'hospital'], ['C', 47, 1517, 'hospital']
  ];
  const metros = [
    ['A', 862, 1120], ['B', 219, 1490], ['E', 998, 33], ['C', 36, 1267], ['C', 230, 26], ['C', 720, 102],
    ['C', 898, 612], ['C', 1432, 437], ['C', 423, 875], ['C', 945, 1110], ['F', 1515, 165]
  ];
  const shields = [
    ['A', 925, 1350, 'S114'], ['B', 1270, 605, 'S100'], ['B', 1290, 1025, 'S100'], ['C', 1133, 1205, 'S100'],
    ['E', 178, 523, 'S114'], ['E', 1290, 308, 'S114'], ['E', 1452, 215, 'S103'], ['F', 109, 1035, 'S103'], ['F', 1306, 95, 'S122']
  ];

  const nav = ['glasses', 'domain', 'documents', 'eye', 'phone', 'hammer'];
</script>

{#snippet pinShape()}
  <path d="M22 48 C14 37 4.500 27 4.500 17.500 C4.500 8 12 1 22 1 C32 1 39.500 8 39.500 17.500 C39.500 27 30 37 22 48Z" />
  <circle cx="22" cy="16.500" r="6.500" />
  <path d="M11 39H7L1 57H43L37 39H33" />
{/snippet}

<div class="frame">
  <aside class="sidebar">
    <svg class="logo" viewBox="2 2 118 120">
      <path fill="#32424b" d="M28 30L2 56V122H56L90 88Z" />
      <path fill="#fff" d="M29 30H51Q54 30 54 34H88Q92 34 92 38V84Q92 88 88 88H30Q26 88 26 84V33Q26 30 29 30Z" />
      <path fill="#d9d9d9" d="M26 67L46 47L74 75L62 87H30Q26 87 26 84Z" />
      <circle cx="60" cy="61" r="15.500" fill="#3f5562" />
      <circle cx="60" cy="61" r="17" fill="none" stroke="#3f5562" stroke-width="4.500" stroke-dasharray="7 6.350" stroke-dashoffset="3.500" />
      <circle cx="60" cy="61" r="8.300" fill="#fff" />
    </svg>
    <nav>
      {#each nav as name}
        <button class="item" class:active={name === 'domain'} aria-label={name}>
          <svg viewBox="2 122 118 132">
            {#if name === 'glasses'}
              <path d="M53 177.500H49Q47 177.500 46 179L36.500 191M73 177.500H77Q79 177.500 80 179L90.500 191M37 189.500C46 187.500 54 188 60.500 191H65.500C72 188 80 187.500 89 189.500C92 191 91.500 196 90 199C87 204 83 205.500 78 205.500C70 205.500 66 201 65 192M37 189.500C34 191 34.500 196 36 199C39 204 43 205.500 48 205.500C56 205.500 60 201 61 192" />
            {:else if name === 'domain'}
              <g transform="translate(40 160)">{@render pinShape()}</g>
            {:else if name === 'documents'}
              <g transform="translate(0 -268)"><path d="M48 438V433H70L81 444V478H75M70 433V443H81M41 440H63L74 451V485H41ZM63 440V451H74" /></g>
            {:else if name === 'eye'}
              <g transform="translate(0 -402)"><path d="M27 594C42 567 78 567 93 594C78 621 42 621 27 594Z" /><circle cx="60" cy="594" r="15.500" /></g>
            {:else if name === 'phone'}
              <g transform="translate(0 -536)"><rect x="47" y="695" width="32" height="58" rx="4" /><rect x="51" y="704" width="24" height="38" /><path d="M60 699.500H66" /><circle cx="63" cy="748" r="2.500" /></g>
            {:else}
              <g transform="translate(0 -670)"><path d="M66 850L33 881Q31 884 33 886.500Q36 888.500 39 886L73 855M50 841Q57 835 69 837Q81 840 90 852L95 854Q96 858 93 861L85 867Q81 865 82 861Q80 858 74 856L63 846Q57 840 50 841Z" /></g>
            {/if}
          </svg>
        </button>
      {/each}
    </nav>
  </aside>

  <main>
    <header class="topbar">
      <h1>Management Console</h1>
      <button class="select">
        <span>Selected domain</span>
        <svg width="32" height="20" viewBox="0 0 32 20"><path d="M1 1.500L16 17.500L31 1.500" /></svg>
      </button>
      <div class="user"><span>Cengiz Ulusoy</span></div>
      <button class="logout" aria-label="Sign out">
        <svg width="46" height="60" viewBox="0 0 46 60"><path d="M17 16H2V58H44V16H29M23 38V3M13 12L23 2L33 12" /></svg>
      </button>
    </header>

    <div class="subbar">
      <button class="back" aria-label="Back"><svg width="20" height="32" viewBox="0 0 20 32"><path d="M18 1.500L2.500 16L18 30.500" /></svg></button>
      <svg class="crumb" width="44" height="58" viewBox="0 0 44 58">{@render pinShape()}</svg>
      <h2>Domain Information</h2>
    </div>

    <section class="content">
      <h3>Selected domain name</h3>
      <div class="columns">
        <form class="form">
          <div class="field wide"><span>Domain name</span></div>
          <div class="field"><span>Latitude</span></div>
          <div class="field"><span>Longitude</span></div>
          <div class="field short"><span>Radius&nbsp; (meters)</span></div>
          <button type="button" class="btn save"><span>Save</span></button>
        </form>

        <div class="right">
          <div class="map">
            <svg class="canvas" viewBox="846 528 1694 1100">
              {#each areas as [t, kind, d]}
                <path class={kind} transform={tf(t)} {d} />
              {/each}
              {#each waterLines as [t, w, d]}
                <path class="line wline" transform={tf(t)} {d} stroke-width={w} />
              {/each}
              {#each arterials as [t, w, d]}
                <path class="line art" transform={tf(t)} {d} stroke-width={w} />
              {/each}
              {#each streets as [t, d]}
                <path class="line minor" transform={tf(t)} {d} />
              {/each}
              {#each rails as [t, w, d]}
                <path class="line rail" transform={tf(t)} {d} stroke-width={w} />
              {/each}
              {#each dotted as [t, d]}
                <path class="line dots" transform={tf(t)} {d} />
              {/each}
              {#each ferries as [t, d]}
                <path class="line ferry" transform={tf(t)} {d} />
              {/each}

              {#each shields as [t, x, y, text]}
                <g transform={`translate(${px(t, x)} ${py(t, y)})`}>
                  <path class="shield" d="M-23 -10Q0 -18 23 -10V10Q0 18 -23 10Z" />
                  <text class="shieldtext" x="-20" y="7" textLength="40">{text}</text>
                </g>
              {/each}
              {#each metros as [t, x, y]}
                <g transform={`translate(${px(t, x)} ${py(t, y)})`}>
                  <rect x="-8" y="-8" width="16" height="16" rx="1" fill="#5aa5ec" />
                  <path d="M-6 6V-6H-3L0 -1L3 -6H6V6H3V0L0 4L-3 0V6Z" fill="#fff" />
                </g>
              {/each}
              <g transform={`translate(${px('C', 1353)} ${py('C', 453)})`}>
                <rect x="-12" y="-12" width="24" height="24" rx="2" fill="#4f9fee" />
                <path d="M-5 -8H5V5H-5ZM-5 6L-7 9M5 6L7 9" fill="#fff" stroke="#fff" stroke-width="1.500" />
                <path d="M-4 -5H4V0H-4ZM-4 2.500H-2V4.500H-4ZM2 2.500H4V4.500H2Z" fill="#4f9fee" />
              </g>

              {#each labels as [t, kind, size, text, x1, x2, y]}
                <text class={'label ' + kind} font-size={size} x={px(t, x1)} y={py(t, y)} textLength={(x2 - x1) * SX}>{text}</text>
              {/each}
              {#each curved as c, i}
                <path id={'street' + i} d={c.d} fill="none" />
                <text class="label street" font-size={c.size} textLength={c.len}><textPath href={'#street' + i} textLength={c.len}>{c.text}</textPath></text>
              {/each}

              {#each pins as [t, x, y, kind]}
                <g transform={`translate(${px(t, x)} ${py(t, y)})`}>
                  {#if kind === 'tree'}
                    <circle r="11" fill="#fff" />
                    <path d="M0 -7L4.500 -1L4 0L6 4L1.500 5V7H-1.500V5L-6 4L-4 0L-4.500 -1Z" fill="#a2f000" />
                  {:else}
                    <circle r="12" fill="#fff" stroke="#bcb5a6" stroke-width="2" />
                    {#if kind === 'dot'}
                      <rect x="-4" y="-4" width="8" height="8" fill="#956b4b" />
                    {:else if kind === 'hospital'}
                      <path d="M-4 -6V6M4 -6V6M-4 0H4" stroke="#d8403c" stroke-width="3" />
                    {:else if kind === 'museum'}
                      <path d="M-7 -3L0 -7L7 -3ZM-6 -2H-4V5H-6ZM4 -2H6V5H4ZM-2 -1H2V1H-2ZM-3 3H3V5H-3ZM-7 5H7V7H-7Z" fill="#956b4b" />
                    {:else}
                      <path d="M-7 -6H-5.500V1H7.500V6H6V4H-5.500V6H-7ZM-4 -3H-1V0H-4ZM0 -3H5Q7.500 -3 7.500 0H0Z" fill="#956b4b" />
                    {/if}
                  {/if}
                </g>
              {/each}

              <circle cx="1677" cy="1146" r="304" fill="#000" fill-opacity=".11" />

              <ellipse class="glow" cx="1677" cy="1158" rx="34" ry="28" />
              <ellipse cx="1677" cy="1148" rx="20.500" ry="16" fill="#ebe8e1" stroke="#fff" stroke-width="8" />
              <path fill="#258fb1" d="M1677 1152C1666 1134 1639.500 1116 1639.500 1090C1639.500 1068 1657 1054 1677 1054C1697 1054 1714.500 1068 1714.500 1090C1714.500 1116 1688 1134 1677 1152Z" />
              <path fill="#186f82" d="M1677 1152C1666 1134 1639.500 1116 1639.500 1090C1639.500 1068 1657 1054 1677 1054Z" />
              <circle cx="1677" cy="1074.500" r="10.200" fill="#d9cfbe" />

              <g class="ctl">
                <rect x="931" y="745" width="6" height="362" fill="#fff" stroke="#9a9a9a" stroke-width="1" />
                <circle cx="934" cy="616" r="51" />
                <rect x="917.500" y="713" width="33" height="33" rx="3" />
                <rect x="917.500" y="861" width="33" height="15" rx="2" />
                <rect x="917.500" y="1105" width="33" height="32" rx="3" />
              </g>
              <path class="arrows" d="M923 592L934 581L945 592M923 641L934 652L945 641M910 605L899 616L910 627M958 605L969 616L958 627" />
              <path class="signs" d="M926 730H942M934 722V738M926 1122H942" />
              <path class="thin" d="M926 868.500H942" />

              <text class="google" x="859" y="1607" textLength="116">Google</text>
            </svg>
            <div class="credits">
              <span class="data">Map data ©2014 Google</span>
              <span class="terms">Terms of Use</span>
              <span class="error">Report a map error</span>
            </div>
          </div>

          <div class="panel">
            <div class="searchrow">
              <div class="field search"><span>Search for streetname, postcode or city</span></div>
              <button class="btn find"><span>Search</span></button>
            </div>
            <div class="note">
              <svg width="68" height="54" viewBox="0 0 68 54">
                <path d="M2 2C10 2 16 6 24 6C32 6 38 2 45 2C53 2 58 6 65 6V52C58 52 53 48 45 48C38 48 32 52 24 52C16 52 10 48 2 48Z" />
                <path class="trail" d="M9 12C12 27 22 29 33 28C44 27 54 18 55 33" />
                <path d="M53 36L60 42M60 36L53 42" />
              </svg>
              <span>You can drag and drop map marker to pin point the location precisely. The coordinates will change accordingly.</span>
            </div>
          </div>
        </div>
      </div>
    </section>
  </main>
</div>

<style>
  :global(body) { margin: 0; background: #fff; }
  * { box-sizing: border-box; }
  button { border: 0; padding: 0; margin: 0; background: none; font: inherit; color: inherit; border-radius: 0; }
  h1, h2, h3 { margin: 0; font-weight: 300; }
  svg { display: block; }

  .frame {
    width: 2800px;
    height: 2000px;
    border: 2px solid #484848;
    display: flex;
    background: #fff;
    font-family: Lato, 'Open Sans', sans-serif;
    font-weight: 300;
    overflow: hidden;
  }
  .sidebar { width: 118px; flex: none; background: #484848; }
  .logo { width: 118px; height: 120px; background: #3f5562; }
  .item { display: block; width: 118px; height: 134px; border-bottom: 2px solid #ebe8e1; }
  .item svg { width: 118px; height: 132px; fill: none; stroke: #f6f5f2; stroke-width: 2; }
  .item.active { background: #b96a24; }

  main { flex: 1; min-width: 0; display: flex; flex-direction: column; }
  .topbar { height: 120px; display: flex; align-items: center; background: #258fb1; color: #fff; }
  h1 { flex: 1; padding: 0 0 9px 30px; font-size: 48px; line-height: 56px; letter-spacing: -2.1px; white-space: nowrap; }
  .select {
    width: 462px; height: 80px; margin-right: 42px; padding: 0 27px 0 26px;
    display: flex; align-items: center; justify-content: space-between;
    background: #fff; color: #484848; font-size: 32px; letter-spacing: -1.5px;
  }
  .select svg { fill: none; stroke: #555; stroke-width: 2; margin-top: 4px; }
  .user {
    width: 300px; height: 120px; display: flex; align-items: center; justify-content: center; padding-right: 8px;
    background: #484848; border-left: 2px solid #fff; font-size: 36px; letter-spacing: -1.5px; white-space: nowrap;
  }
  .logout {
    width: 120px; height: 120px; display: flex; align-items: center; justify-content: center; padding-bottom: 4px;
    background: #484848; border-left: 2px solid #fff;
  }
  .logout svg { fill: none; stroke: #f6f5f2; stroke-width: 2; }

  .subbar { height: 182px; display: flex; align-items: center; background: #ebe8e1; border-bottom: 2px solid #b1b1b1; }
  .back { width: 112px; height: 180px; border-right: 2px solid #b1b1b1; display: flex; align-items: center; justify-content: center; padding: 6px 8px 0 0; }
  .back svg { fill: none; stroke: #3f5562; stroke-width: 2.5; }
  .crumb { margin: 0 0 2px 36px; fill: none; stroke: #8b8b8b; stroke-width: 2; }
  h2 { margin-left: 24px; padding-bottom: 2px; font-size: 44px; line-height: 52px; letter-spacing: -1.7px; color: #808080; white-space: nowrap; }

  .content { padding: 89px 0 0 110px; }
  h3 { margin-left: -4px; font-size: 60px; line-height: 72px; letter-spacing: -3.1px; color: #258fb1; white-space: nowrap; }
  .columns { display: flex; margin-top: 63px; }
  .form { width: 616px; flex: none; display: flex; flex-direction: column; align-items: flex-start; gap: 56px; }
  .field {
    width: 420px; height: 104px; border: 2px solid #b1b1b1; border-radius: 3px; background: #fff;
    display: flex; align-items: center; padding: 0 0 6px 32px;
    font-size: 28px; letter-spacing: -1.35px; color: #777; white-space: nowrap;
  }
  .field.wide { width: 558px; }
  .field.short { width: 244px; letter-spacing: -1.1px; }
  .btn { height: 100px; background: #b96a24; color: #fff; font-size: 40px; letter-spacing: -1.6px; text-align: center; }
  .save { width: 196px; margin: 2px 0 0 2px; }

  .right { width: 1694px; display: flex; flex-direction: column; gap: 4px; }
  .map { position: relative; height: 1100px; overflow: hidden; background: #f4e7d6; }
  .canvas { width: 1694px; height: 1100px; }
  .land { fill: #f4e7d6; }
  .ind { fill: #e0dcd5; }
  .pale { fill: #e6e5e3; }
  .rails { fill: #d3d1ce; }
  .yard { fill: #cfcdca; }
  .olive { fill: #ede5d0; }
  .green { fill: #c8dac7; }
  .pink { fill: #ebd3d0; }
  .water { fill: #abbccb; }
  .line { fill: none; vector-effect: non-scaling-stroke; stroke-linejoin: round; }
  .wline { stroke: #abbccb; }
  .art { stroke: #ebdfd0; }
  .minor { stroke: #fffdf8; stroke-width: 2.2; stroke-opacity: .85; }
  .rail { stroke: #bfc0c0; }
  .dots { stroke: #c9c5bf; stroke-width: 3; stroke-dasharray: 2 4; }
  .ferry { stroke: #8ab4f8; stroke-width: 3; stroke-dasharray: 13 7; }
  .label { font-family: Roboto, 'Open Sans', sans-serif; font-weight: 400; paint-order: stroke; stroke: #fff; stroke-opacity: .7; stroke-width: 4px; stroke-linejoin: round; }
  .poi { fill: #433f3c; }
  .park { fill: #4c9a47; font-style: italic; }
  .area { fill: #b9a57e; font-weight: 500; }
  .street { fill: #857861; }
  .shield { fill: #fff; stroke: #8a8781; stroke-width: 2; }
  .shieldtext { font: 400 19px Roboto, sans-serif; fill: #4b4742; }
  .glow { fill: #4a3f33; fill-opacity: .22; filter: blur(12px); }
  .ctl { fill: #fff; stroke: #b8b5b0; stroke-width: 1; filter: drop-shadow(0 2px 2px rgba(0, 0, 0, .35)); }
  .arrows, .signs { fill: none; stroke: #808080; stroke-width: 5; }
  .signs { stroke-width: 4; }
  .thin { stroke: #666; stroke-width: 2; }
  .google { font: 40px 'Liberation Serif', serif; fill: #fff; filter: drop-shadow(1px 2px 1px rgba(0, 0, 0, .45)); }
  .credits {
    position: absolute; right: 0; bottom: 0; width: 580px; height: 28px; display: flex; align-items: center;
    background: rgba(245, 245, 245, .72); font: 400 20px/28px Roboto, sans-serif; color: #484848; white-space: nowrap;
  }
  .data { width: 247px; padding-left: 11px; border-right: 2px solid #abbccb; }
  .terms { width: 140px; padding-left: 8px; border-right: 2px solid #ddd8d0; color: #3fcb78; }
  .error { padding-left: 12px; color: #3fcb78; }

  .panel { height: 320px; background: #ebe8e1; padding: 60px 0 0 52px; }
  .searchrow { display: flex; align-items: center; gap: 46px; }
  .search { width: 1310px; }
  .find { width: 230px; }
  .note { display: flex; align-items: center; gap: 21px; margin-top: 49px; color: #777; font-size: 28px; font-style: italic; letter-spacing: -1.16px; white-space: nowrap; }
  .note svg { fill: none; stroke: #a0a0a0; stroke-width: 2; }
  .note span { padding-bottom: 1px; }
  .note .trail { stroke-dasharray: 3 4; }
</style>
